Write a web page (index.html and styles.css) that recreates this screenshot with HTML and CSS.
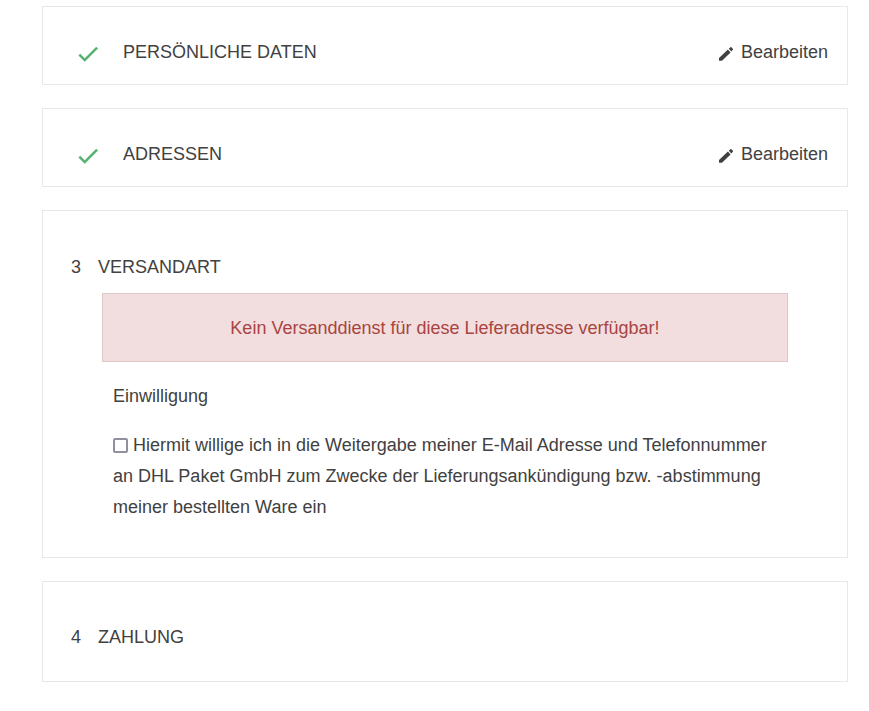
FILE: index.html
```html
<!DOCTYPE html>
<html lang="de">
<head>
<meta charset="utf-8">
<meta name="viewport" content="width=device-width, initial-scale=1">
<title>Kasse</title>
<link rel="stylesheet" href="styles.css">
</head>
<body>
<main class="checkout">
  <section class="step step-done">
    <svg class="icon-check" viewBox="0 0 24 24" aria-hidden="true"><path d="M9 16.17L4.83 12l-1.42 1.41L9 19 21 7l-1.41-1.41z"/></svg>
    <h1 class="title">PERSÖNLICHE DATEN</h1>
    <a class="edit" href="#"><svg class="icon-edit" viewBox="0 0 14 14" aria-hidden="true"><path d="M0 13.8V11L8.9 2.6l2.7 2.8L3 13.8zM9.8 1.8L11.4.3q.5-.4 1 0l1.4 1.4q.4.5 0 1l-1.4 1.8z"/></svg>Bearbeiten</a>
  </section>
  <section class="step step-done">
    <svg class="icon-check" viewBox="0 0 24 24" aria-hidden="true"><path d="M9 16.17L4.83 12l-1.42 1.41L9 19 21 7l-1.41-1.41z"/></svg>
    <h1 class="title">ADRESSEN</h1>
    <a class="edit" href="#"><svg class="icon-edit" viewBox="0 0 14 14" aria-hidden="true"><path d="M0 13.8V11L8.9 2.6l2.7 2.8L3 13.8zM9.8 1.8L11.4.3q.5-.4 1 0l1.4 1.4q.4.5 0 1l-1.4 1.8z"/></svg>Bearbeiten</a>
  </section>
  <section class="step step-current">
    <h1 class="title numbered"><span class="number">3</span>VERSANDART</h1>
    <div class="content">
      <p class="alert" role="alert">Kein Versanddienst für diese Lieferadresse verfügbar!</p>
      <div class="consent">
        <p class="consent-title">Einwilligung</p>
        <input class="checkbox" type="checkbox" id="consent"> <label for="consent">Hiermit willige ich in die Weitergabe meiner E-Mail Adresse und Telefonnummer an DHL Paket GmbH zum Zwecke der Lieferungsankündigung bzw. -abstimmung meiner bestellten Ware ein</label>
      </div>
    </div>
  </section>
  <section class="step step-pending">
    <h1 class="title numbered"><span class="number">4</span>ZAHLUNG</h1>
  </section>
</main>
</body>
</html>
```
FILE: styles.css
```css
* {
  box-sizing: border-box;
}

body {
  margin: 0;
  background: #fff;
  color: #414141;
  font: 18px/30px "Liberation Sans", Arial, sans-serif;
}

.checkout {
  display: flex;
  flex-direction: column;
  gap: 23px;
  padding: 6px 21px 28px 42px;
}

.step {
  border: 1px solid #e8e8e8;
}

.step-done {
  display: flex;
  align-items: center;
  padding: 30px 19px 17px 32px;
}

.title {
  margin: 0;
  font-size: 18px;
  font-weight: 400;
}

.icon-check {
  width: 26px;
  height: 26px;
  margin: 4px 22px 0 0;
  fill: #53b06c;
  stroke: #53b06c;
  stroke-width: 0.4;
}

.edit {
  display: flex;
  align-items: center;
  gap: 8px;
  margin-left: auto;
  color: inherit;
  text-decoration: none;
}

.icon-edit {
  width: 14px;
  height: 14px;
  margin-top: 4px;
  fill: #414141;
}

.step-current {
  padding: 41px 28px 34px;
}

.numbered {
  display: flex;
  gap: 17px;
}

.content {
  padding: 11px 31px 0;
}

.alert {
  margin: 0;
  padding: 19px 19px 18px;
  border: 1px solid #dfc8c8;
  background: #f2dede;
  color: #a94442;
  text-align: center;
}

.consent {
  padding: 19px 11px 0;
  line-height: 31px;
}

.consent-title {
  margin: 0 0 18px;
}

.checkbox {
  appearance: none;
  width: 15px;
  height: 15px;
  margin: 0;
  border: 2px solid #8f8f9d;
  border-radius: 2px;
  background: #fff;
  vertical-align: -2px;
}

.checkbox:checked {
  background: #4cae64;
}

.step-pending {
  padding: 40px 28px 29px;
}
```
